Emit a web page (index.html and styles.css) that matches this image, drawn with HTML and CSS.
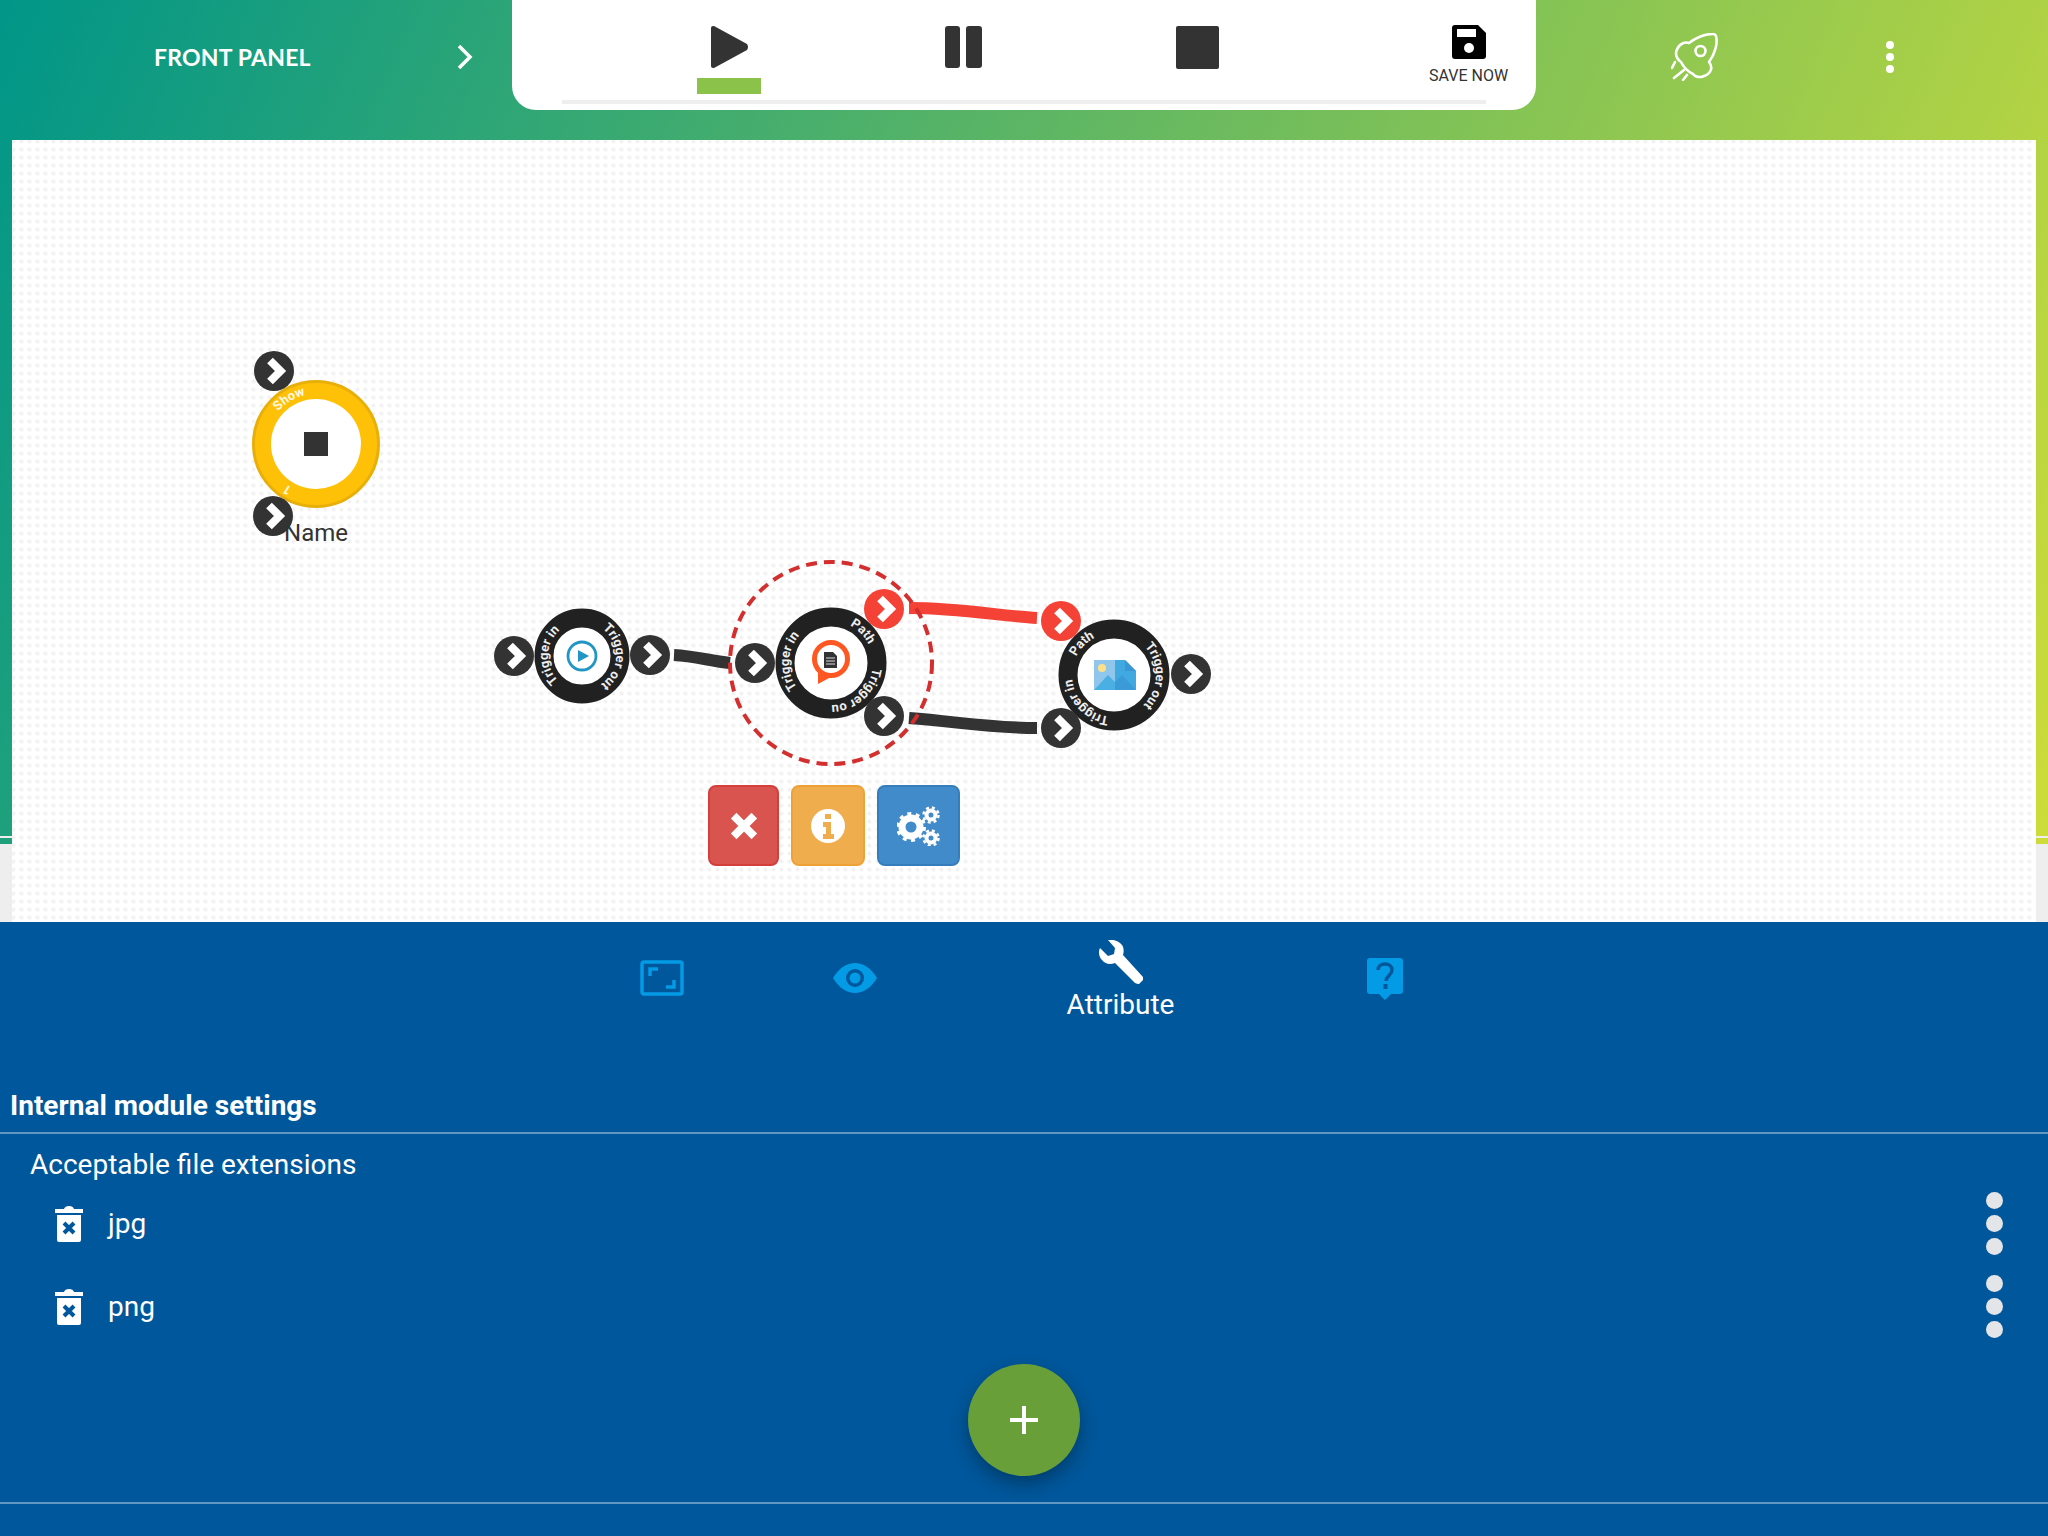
FILE: index.html
```html
<!DOCTYPE html>
<html lang="en">
<head>
  <meta charset="UTF-8" />
  <title>Front Panel</title>
  <link rel="stylesheet" href="styles.css">
</head>
<body>

  <div class="stage">

    <!-- Top bar -->
    <header class="topbar">
      <div class="panel-link">
        <span class="panel-title">FRONT PANEL</span>
        <svg class="panel-arrow" width="16" height="24" viewBox="0 0 16 24"><path d="M2 1l11 11L2 23" fill="none" stroke="#fff" stroke-width="3.5"/></svg>
      </div>

      <div class="toolbar">
        <div class="tool tool-play">
          <svg width="38" height="42" viewBox="0 0 38 42"><path d="M2 0h1l33 18q2 3 0 6L3 42H2q-2 0-2-2V2q0-2 2-2z" fill="#333"/></svg>
          <span class="tool-active"></span>
        </div>
        <div class="tool tool-pause">
          <svg width="37" height="42" viewBox="0 0 37 42"><rect width="15" height="42" rx="3" fill="#333"/><rect x="21" width="16" height="42" rx="3" fill="#333"/></svg>
        </div>
        <div class="tool tool-stop">
          <svg width="43" height="43" viewBox="0 0 43 43"><rect width="43" height="43" rx="2" fill="#333"/></svg>
        </div>
        <div class="tool tool-save">
          <svg width="34" height="34" viewBox="0 0 34 34"><path d="M3 0h23l8 8v23q0 3-3 3H3q-3 0-3-3V3q0-3 3-3z" fill="#000"/><rect x="5" y="4" width="19" height="8" fill="#fff"/><circle cx="17" cy="23" r="5" fill="#fff"/></svg>
          <span class="tool-label">SAVE NOW</span>
        </div>
        <div class="toolbar-track"></div>
      </div>

      <div class="topbar-right">
        <svg width="48" height="48" viewBox="0 0 48 48" fill="none" stroke="#fff" stroke-width="2.6" stroke-linecap="round" stroke-linejoin="round">
          <path d="M42 1C34 1 26 4 18 10C12 8 6 13 5 20C5 24 7 27 10 29C12 33 16 38 22 41C24 44 29 45 33 43C39 41 43 35 38 29C44 21 47 10 45 3Q44 1 42 1z"/>
          <circle cx="29.5" cy="18" r="5"/>
          <path d="M4 29L1 35M13 37L3 45M16 42L12 47"/>
        </svg>
        <div class="kebab-small"><i></i><i></i><i></i></div>
      </div>
    </header>

    <!-- Diagram canvas -->
    <main class="canvas">
      <svg class="diagram" width="2024" height="782" viewBox="12 140 2024 782">
        <defs>
          <path id="arcS" d="M0 -50A50 50 0 1 1 -0.01 -50"/>
          <path id="arcM" d="M0 -34A34 34 0 1 1 -0.01 -34"/>
          <path id="arcL" d="M0 -42A42 42 0 1 1 -0.01 -42"/>
          <g id="port">
            <circle r="20"/>
            <path d="M-4 -10.5L6.5 0L-4 10.5" fill="none" stroke="#fff" stroke-width="8" stroke-linejoin="miter"/>
          </g>
        </defs>

        <!-- wires -->
        <path class="wire" d="M674 655C695 656 710 661 730 663"/>
        <path class="wire wire-red" d="M909 608C960 608 1000 616 1037 618"/>
        <path class="wire" d="M909 718C960 722 990 728 1037 728"/>

        <!-- name node -->
        <circle cx="316" cy="444" r="62.5" fill="#ffc107" stroke="#e8af0a" stroke-width="3"/>
        <circle cx="316" cy="444" r="45" fill="#fff"/>
        <rect x="304" y="432" width="24" height="24" fill="#333"/>
        <g transform="translate(316 444) rotate(-49)"><text class="ring-label small"><textPath href="#arcS">Show</textPath></text></g>
        <g transform="translate(316 444) rotate(208)"><text class="ring-label small"><textPath href="#arcS">1</textPath></text></g>
        <use href="#port" class="port" x="274" y="371"/>
        <use href="#port" class="port" x="273" y="516"/>
        <text class="node-name" x="316" y="541">Name</text>

        <!-- start node -->
        <circle cx="582" cy="656" r="38" class="ring"/>
        <g transform="translate(582 656) rotate(224)"><text class="ring-label"><textPath href="#arcM">Trigger in</textPath></text></g>
        <g transform="translate(582 656) rotate(37)"><text class="ring-label"><textPath href="#arcM">Trigger out</textPath></text></g>
        <circle cx="582" cy="656" r="14" fill="none" stroke="#2196c4" stroke-width="2.8"/>
        <path d="M578 650l11 6l-11 6z" fill="#2196c4"/>
        <use href="#port" class="port" x="514" y="656"/>
        <use href="#port" class="port" x="650" y="655"/>

        <!-- file node -->
        <circle cx="831" cy="663" r="46" class="ring"/>
        <g transform="translate(831 663) rotate(234)"><text class="ring-label"><textPath href="#arcL">Trigger in</textPath></text></g>
        <g transform="translate(831 663) rotate(27)"><text class="ring-label"><textPath href="#arcL">Path</textPath></text></g>
        <g transform="translate(831 663) rotate(97)"><text class="ring-label"><textPath href="#arcL">Trigger ou</textPath></text></g>
        <circle cx="831" cy="659" r="16.5" fill="#fff" stroke="#ff5722" stroke-width="5"/>
        <path d="M818 668l0 16l13 -7z" fill="#ff5722"/>
        <path d="M824 652h9l4 4v12h-13z" fill="#333"/>
        <path d="M826 658h9M826 661h9M826 664h9" stroke="#ddd" stroke-width="1"/>
        <use href="#port" class="port" x="755" y="663"/>
        <use href="#port" class="port port-red" x="884" y="609"/>
        <use href="#port" class="port" x="884" y="716"/>
        <circle cx="831" cy="663" r="101" fill="none" stroke="#d32f2f" stroke-width="4" stroke-dasharray="11 7"/>

        <!-- image node -->
        <circle cx="1114" cy="675" r="46" class="ring"/>
        <g transform="translate(1114 675) rotate(296)"><text class="ring-label"><textPath href="#arcL">Path</textPath></text></g>
        <g transform="translate(1114 675) rotate(47)"><text class="ring-label"><textPath href="#arcL">Trigger out</textPath></text></g>
        <g transform="translate(1114 675) rotate(187)"><text class="ring-label"><textPath href="#arcL">Trigger in</textPath></text></g>
        <rect x="1094" y="660" width="21" height="30" fill="#90c6ec"/>
        <path d="M1115 660h10l11 11v19h-21z" fill="#3fa9e0"/>
        <path d="M1125 660l11 11h-11z" fill="#3a96d4"/>
        <circle cx="1102" cy="668" r="4" fill="#ffdf8a"/>
        <path d="M1094 690l14 -15l7 7v8z" fill="#4ab0e4"/>
        <path d="M1115 682l7 -7l14 15h-21z" fill="#3a9bd8"/>
        <use href="#port" class="port port-red" x="1061" y="621"/>
        <use href="#port" class="port" x="1061" y="728"/>
        <use href="#port" class="port" x="1191" y="674"/>
      </svg>

      <!-- Node menu -->
      <div class="node-menu">
        <button class="node-btn btn-delete">
          <svg width="28" height="28" viewBox="0 0 28 28"><path d="M6.5 6.5L21.5 21.5M21.5 6.5L6.5 21.5" stroke="#fff" stroke-width="8" stroke-linecap="square"/></svg>
        </button>
        <button class="node-btn btn-info">
          <svg width="34" height="34" viewBox="0 0 34 34"><circle cx="17" cy="17" r="17" fill="#fff"/><path d="M14 5h6v5h-6zM12 13h8v12h3v5H12v-5h3v-7h-3z" fill="#f0ad4e"/></svg>
        </button>
        <button class="node-btn btn-settings">
          <svg width="44" height="40" viewBox="0 0 44 40" fill="#fff">
            <circle cx="14" cy="21" r="9" fill="none" stroke="#fff" stroke-width="7"/>
            <circle cx="14" cy="21" r="13.5" fill="none" stroke="#fff" stroke-width="3" stroke-dasharray="4 4.5"/>
            <circle cx="34" cy="9" r="4.5" fill="none" stroke="#fff" stroke-width="4"/>
            <circle cx="34" cy="9" r="7.5" fill="none" stroke="#fff" stroke-width="2.5" stroke-dasharray="3 3"/>
            <circle cx="34" cy="32" r="4.5" fill="none" stroke="#fff" stroke-width="4"/>
            <circle cx="34" cy="32" r="7.5" fill="none" stroke="#fff" stroke-width="2.5" stroke-dasharray="3 3"/>
          </svg>
        </button>
      </div>
    </main>
  </div>

  <!-- Bottom panel -->
  <section class="panel">
    <nav class="tabs">
      <div class="tab tab-frame">
        <svg width="44" height="36" viewBox="0 0 44 36" fill="none" stroke="#039be5"><rect x="2" y="2" width="40" height="32" rx="2" stroke-width="3.5"/><path d="M10 16v-7h8M34 20v7h-8" stroke-width="3.5"/></svg>
      </div>
      <div class="tab tab-eye">
        <svg width="44" height="30" viewBox="0 0 44 30"><path d="M0 15C6 5 14 0 22 0s16 5 22 15c-6 10-14 15-22 15S6 25 0 15z" fill="#039be5"/><circle cx="22" cy="15" r="9" fill="#01579b"/><circle cx="22" cy="15" r="5.5" fill="#039be5"/></svg>
      </div>
      <div class="tab tab-attr">
        <svg width="44" height="44" viewBox="0 0 44 44"><path d="M9 0c5-1 11 1 14 5 2 3 2 7 1 10l20 22q1 2-1 4l-3 3q-2 0-4-1L16 23c-5 2-10 1-13-3C0 17-1 12 1 8l8 8 6-2 1-6z" fill="#fff"/></svg>
        <span class="tab-label">Attribute</span>
      </div>
      <div class="tab tab-help">
        <svg width="36" height="42" viewBox="0 0 36 42"><path d="M3 0h30q3 0 3 3v30q0 3-3 3h-9l-6 6-6-6H3q-3 0-3-3V3q0-3 3-3z" fill="#039be5"/><path d="M11 12c0-4 3-6 7-6s7 2 7 6c0 5-6 6-6 11" fill="none" stroke="#01579b" stroke-width="3.5"/><rect x="16.5" y="26" width="4" height="5" fill="#01579b"/></svg>
      </div>
    </nav>

    <h2 class="section-title">Internal module settings</h2>

    <div class="settings">
      <div class="field-label">Acceptable file extensions</div>
      <ul class="ext-list">
        <li class="ext-row">
          <svg class="trash" width="28" height="36" viewBox="0 0 28 36"><path d="M0 3h9q1-3 5-3t5 3h9v4H0z" fill="#fff"/><path d="M2 9h24v25q0 2-2 2H4q-2 0-2-2z" fill="#fff"/><path d="M9 17l10 10M19 17L9 27" stroke="#01579b" stroke-width="4"/></svg>
          <span class="ext-name">jpg</span>
          <div class="kebab"><i></i><i></i><i></i></div>
        </li>
        <li class="ext-row">
          <svg class="trash" width="28" height="36" viewBox="0 0 28 36"><path d="M0 3h9q1-3 5-3t5 3h9v4H0z" fill="#fff"/><path d="M2 9h24v25q0 2-2 2H4q-2 0-2-2z" fill="#fff"/><path d="M9 17l10 10M19 17L9 27" stroke="#01579b" stroke-width="4"/></svg>
          <span class="ext-name">png</span>
          <div class="kebab"><i></i><i></i><i></i></div>
        </li>
      </ul>
    </div>

    <button class="fab">
      <svg width="28" height="28" viewBox="0 0 28 28"><path d="M14 0v28M0 14h28" stroke="#fff" stroke-width="4"/></svg>
    </button>

    <div class="panel-end"></div>
  </section>

</body>
</html>
```

FILE: styles.css
```css
* {
  box-sizing: border-box;
}

html, body {
  margin: 0;
  padding: 0;
  height: 1536px;
  overflow: hidden;
}

body {
  font-family: Roboto, sans-serif;
  color: #fff;
}

svg {
  display: block;
}

/* Top area */
.stage {
  position: relative;
  height: 922px;
  display: flex;
  flex-direction: column;
  background:
    linear-gradient(#eee, #eee) left bottom / 100% 78px no-repeat,
    linear-gradient(113deg, #009688, #cddc39) left top / 100% 844px no-repeat;
}

.stage::before {
  content: "";
  position: absolute;
  left: 0;
  right: 0;
  top: 836px;
  height: 2px;
  background: #eee;
}

.topbar {
  position: relative;
  display: flex;
  height: 140px;
  flex: none;
}

.panel-link {
  width: 512px;
  height: 114px;
  padding-left: 154px;
  display: flex;
  align-items: center;
}

.panel-title {
  width: 303px;
  font-family: Lato, sans-serif;
  font-size: 23px;
  font-weight: 700;
  letter-spacing: 0.2px;
}

/* Toolbar */
.toolbar {
  position: relative;
  width: 1024px;
  height: 110px;
  background: #fff;
  border-radius: 0 0 24px 24px;
  display: flex;
  align-items: flex-start;
  padding: 26px 0 0 199px;
}

.tool {
  display: flex;
  flex-direction: column;
  align-items: center;
}

.tool-play {
  width: 38px;
}

.tool-active {
  width: 64px;
  height: 16px;
  margin: 10px 2px 0 0;
  flex: none;
  background: #8bc34a;
}

.tool-pause {
  margin-left: 196px;
}

.tool-stop {
  margin-left: 194px;
}

.tool-save {
  margin-left: 210px;
  margin-top: -1px;
  color: #333;
}

.tool-label {
  margin-top: 7px;
  font-size: 16px;
  white-space: nowrap;
}

.toolbar-track {
  position: absolute;
  left: 50px;
  right: 50px;
  bottom: 6px;
  height: 4px;
  background: #eee;
}

.topbar-right {
  flex: 1;
  height: 114px;
  padding-left: 135px;
  display: flex;
  align-items: center;
}

.kebab-small {
  margin-left: 167px;
  display: flex;
  flex-direction: column;
  gap: 4px;
}

.kebab-small i {
  width: 8px;
  height: 8px;
  border-radius: 50%;
  background: #fff;
}

/* Canvas */
.canvas {
  position: relative;
  flex: 1;
  margin: 0 12px;
  background-color: #fff;
  background-image: radial-gradient(circle, #f1f1f1 1.6px, transparent 1.9px);
  background-size: 8px 8px;
  background-position: 5.5px -2.5px;
}

.diagram {
  position: absolute;
  left: 0;
  top: 0;
}

.wire {
  fill: none;
  stroke: #333;
  stroke-width: 12;
}

.wire-red {
  stroke: #f44336;
}

.port {
  fill: #333;
}

.port-red {
  fill: #f44336;
}

.ring {
  fill: #fff;
  stroke: #212121;
  stroke-width: 19;
}

.ring-label {
  fill: #eee;
  font-family: Roboto, sans-serif;
  font-size: 13px;
  font-weight: 700;
}

.ring-label.small {
  fill: #fff8e0;
}

.node-name {
  fill: #333;
  font-family: Roboto, sans-serif;
  font-size: 24px;
  text-anchor: middle;
}

.node-menu {
  position: absolute;
  left: 696px;
  top: 645px;
  display: flex;
  gap: 12px;
}

.node-btn {
  height: 81px;
  padding: 0;
  border-radius: 8px;
  border: 2px solid;
  display: flex;
  align-items: center;
  justify-content: center;
}

.btn-delete {
  width: 71px;
  background: #d9534f;
  border-color: #d43f3a;
}

.btn-info {
  width: 74px;
  background: #f0ad4e;
  border-color: #eea236;
}

.btn-settings {
  width: 83px;
  background: #428bca;
  border-color: #357ebd;
}

/* Bottom panel */
.panel {
  height: 614px;
  background: #01579b;
  display: flex;
  flex-direction: column;
}

.tabs {
  display: flex;
  align-items: flex-start;
  margin-top: 18px;
  padding-left: 640px;
}

.tab {
  display: flex;
  flex-direction: column;
  align-items: center;
}

.tab-frame {
  margin-top: 20px;
}

.tab-eye {
  margin-top: 23px;
  margin-left: 149px;
}

.tab-attr {
  margin-left: 190px;
  width: 107px;
}

.tab-help {
  margin-top: 18px;
  margin-left: 193px;
}

.tab-label {
  margin: 5px 0 -1px;
  font-size: 28px;
  line-height: 32px;
  white-space: nowrap;
}

.section-title {
  height: 47px;
  margin: 67px 0 0;
  padding-left: 10px;
  border-bottom: 2px solid rgba(255, 255, 255, 0.38);
  font-size: 28px;
  font-weight: 700;
  line-height: 38px;
}

.field-label {
  margin: 15px 0 1px;
  padding-left: 30px;
  font-size: 28px;
  line-height: 32px;
}

.ext-list {
  list-style: none;
  margin: 0;
  padding: 0;
}

.ext-row {
  display: flex;
  align-items: center;
  height: 83px;
  padding: 0 45px 0 55px;
}

.trash {
  flex: none;
}

.ext-name {
  margin-left: 25px;
  flex: 1;
  font-size: 28px;
}

.kebab {
  display: flex;
  flex-direction: column;
  gap: 6px;
}

.kebab i {
  width: 17px;
  height: 17px;
  border-radius: 50%;
  background: #e4e5e8;
}

.fab {
  width: 112px;
  height: 112px;
  flex: none;
  align-self: center;
  margin-top: 16px;
  padding: 0;
  border: none;
  border-radius: 50%;
  background: #689f38;
  box-shadow: 0 8px 18px rgba(0, 0, 0, 0.3);
  display: flex;
  align-items: center;
  justify-content: center;
}

.panel-end {
  height: 2px;
  margin-top: 26px;
  background: rgba(255, 255, 255, 0.38);
}
```
